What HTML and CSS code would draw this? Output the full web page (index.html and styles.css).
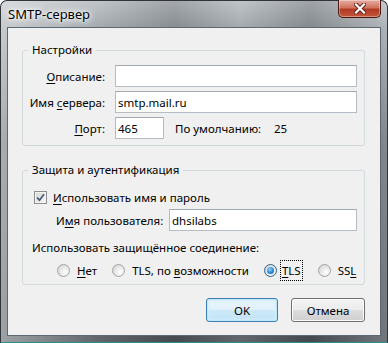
FILE: index.html
```html
<!DOCTYPE html>
<html lang="ru">
<head>
  <meta charset="UTF-8" />
  <title>SMTP-сервер</title>
  <link rel="stylesheet" href="styles.css">
</head>
<body>

  <div class="window">
    <div class="titlebar">
      <span class="title">SMTP-сервер</span>
      <div class="close">
        <svg width="12" height="11" viewBox="0 0 12 11">
          <path d="M2 1.5 L10 9.5 M10 1.5 L2 9.5" stroke="#5a1b12" stroke-width="4" stroke-linecap="square"/>
          <path d="M2 1.5 L10 9.5 M10 1.5 L2 9.5" stroke="#fff" stroke-width="2.2" stroke-linecap="square"/>
        </svg>
      </div>
    </div>

    <div class="client">
      <fieldset class="group">
        <legend>Настройки</legend>
        <div class="form-grid">
          <label><u>О</u>писание:</label>
          <input type="text" value="" />

          <label>Имя <u>с</u>ервера:</label>
          <input type="text" value="smtp.mail.ru" />

          <label><u>П</u>орт:</label>
          <div class="port-row">
            <input type="text" class="port" value="465" />
            <span class="default-label">По умолчанию:</span>
            <span>25</span>
          </div>
        </div>
      </fieldset>

      <fieldset class="group auth">
        <legend>Защита и аутентификация</legend>
        <div class="check-row">
          <span class="checkbox">
            <svg width="11" height="11" viewBox="0 0 11 11">
              <path d="M2 5.5 L4.5 8.2 L9 2.3" fill="none" stroke="#4a5a7a" stroke-width="1.8"/>
            </svg>
          </span>
          <span><u>И</u>спользовать имя и пароль</span>
        </div>
        <div class="user-row">
          <label>И<u>м</u>я пользователя:</label>
          <input type="text" value="dhsilabs" />
        </div>
        <div class="secure-label">Использовать защищённое соединение:</div>
        <div class="radios">
          <div class="radio"><span class="dot"></span><span><u>Н</u>ет</span></div>
          <div class="radio"><span class="dot"></span><span>TLS, по <u>в</u>озможности</span></div>
          <div class="radio"><span class="dot checked"></span><span class="focus"><u>T</u>LS</span></div>
          <div class="radio"><span class="dot"></span><span>SS<u>L</u></span></div>
        </div>
      </fieldset>

      <div class="buttons">
        <button class="btn default">OK</button>
        <button class="btn cancel">Отмена</button>
      </div>
    </div>
  </div>

</body>
</html>
```

FILE: styles.css
```css
* {
  box-sizing: border-box;
}

body {
  margin: 0;
  font-family: "Noto Sans", sans-serif;
  font-size: 11.5px;
  color: #000;
  background: #fff;
  white-space: nowrap;
}

u {
  text-decoration-thickness: 1px;
  text-underline-offset: 2px;
}

.window {
  width: 388px;
  height: 343px;
  border: 1px solid #2f353a;
  border-bottom-color: #2c8c8e;
  border-radius: 7px 7px 0 0;
  padding: 0 6px 6px;
  display: flex;
  flex-direction: column;
  background:
    linear-gradient(to right, rgba(255,255,255,0.45), rgba(255,255,255,0.1) 25%, rgba(0,0,0,0.12) 45%, rgba(255,255,255,0.1) 62%, rgba(0,0,0,0.14) 80%, rgba(255,255,255,0.2)),
    linear-gradient(to bottom, #b9bec2 0, #9aa0a5 27px, #656b70 140px, #4f555a 100%);
}

.titlebar {
  height: 26px;
  display: flex;
  align-items: flex-start;
  justify-content: space-between;
}

.title {
  margin-top: 4px;
  padding-left: 1px;
  font-size: 13px;
  line-height: 18px;
  text-shadow: 0 0 6px #fff, 0 0 10px #fff, 0 0 3px #fff;
}

.close {
  width: 43px;
  height: 18px;
  margin-top: -1px;
  border: 1px solid #4a1a12;
  border-top: none;
  border-radius: 0 0 5px 5px;
  background: linear-gradient(to bottom, #e6aea2 0, #d0735f 45%, #b23a24 55%, #c2573b 100%);
  box-shadow: inset 0 0 0 1px rgba(255,255,255,0.35);
  display: flex;
  align-items: center;
  justify-content: center;
}

.client {
  flex: 1;
  background: #f0f0f0;
  border: 1px solid #5c6872;
  padding: 14px 15px 0 14px;
  display: flex;
  flex-direction: column;
}

.group {
  margin: 0;
  border: 1px solid #d3dade;
  border-radius: 3px;
  padding: 7px 7px 6px 5px;
}

.group legend {
  padding: 0 4px;
  line-height: 16px;
}

.form-grid {
  display: grid;
  grid-template-columns: 77px 1fr;
  column-gap: 10px;
  row-gap: 4px;
  align-items: center;
}

.form-grid label {
  text-align: right;
}

input {
  height: 22px;
  width: 100%;
  margin: 0;
  padding: 0 2px;
  font-family: "Noto Sans", sans-serif;
  font-size: 11.5px;
  color: #000;
  background: #fff;
  border: 1px solid #b5bcc4;
  border-top-color: #a2a9b1;
  border-radius: 0;
  outline: none;
}

.port-row {
  display: flex;
  align-items: center;
}

.port-row input.port {
  width: 49px;
  margin-right: 11px;
}

.default-label {
  width: 99px;
}

.auth {
  margin-top: 16px;
  padding-top: 11px;
  padding-bottom: 4px;
}

.check-row {
  display: flex;
  align-items: center;
  height: 16px;
  padding-left: 6px;
  gap: 6px;
}

.checkbox {
  width: 13px;
  height: 13px;
  border: 1px solid #8e8f8f;
  background: linear-gradient(135deg, #d6d6d6, #f8f8f8);
  box-shadow: inset 0 0 0 1px #f4f4f4;
  display: flex;
  align-items: center;
  justify-content: center;
}

.user-row {
  display: flex;
  align-items: center;
  margin-top: 4px;
  padding-left: 28px;
}

.user-row label {
  width: 113px;
  flex-shrink: 0;
}

.secure-label {
  margin-top: 9px;
  padding-left: 4px;
  line-height: 16px;
}

.radios {
  display: flex;
  align-items: center;
  height: 20px;
  margin-top: 4px;
  padding-left: 29px;
  gap: 15px;
}

.radio {
  display: flex;
  align-items: center;
  gap: 7px;
}

.dot {
  width: 13px;
  height: 13px;
  border-radius: 50%;
  border: 1px solid #a3a3a3;
  background: radial-gradient(circle at 65% 65%, #ffffff, #e2e2e2 60%, #cfcfcf);
  position: relative;
}

.dot.checked {
  border-color: #2c628b;
}

.dot.checked::after {
  content: "";
  position: absolute;
  left: 2px;
  top: 2px;
  width: 7px;
  height: 7px;
  border-radius: 50%;
  background: radial-gradient(circle at 40% 35%, #8fd6fa, #2a8ad4 55%, #0f4f86);
}

.focus {
  margin-left: -4px;
  border: 1px dotted #000;
  padding: 1px 1px;
  line-height: 17px;
}

.buttons {
  display: flex;
  justify-content: flex-end;
  gap: 13px;
  margin-top: 13px;
}

.btn {
  height: 24px;
  padding: 0;
  font-family: "Noto Sans", sans-serif;
  font-size: 11.5px;
  color: #000;
  border: 1px solid #707070;
  border-radius: 3px;
  background: linear-gradient(to bottom, #f3f3f3 0, #ebebeb 50%, #dddddd 50%, #cfcfcf 100%);
  box-shadow: inset 0 0 0 1px #fbfbfb;
}

.btn.default {
  width: 72px;
  border-color: #3c7fb1;
  background: linear-gradient(to bottom, #eaf6fd 0, #e0f1fb 50%, #cde9f9 50%, #c0e2f6 100%);
  box-shadow: inset 0 0 0 1px #bfe6fb, inset 0 0 3px 2px #d2eefc;
}

.btn.cancel {
  width: 74px;
}
```
